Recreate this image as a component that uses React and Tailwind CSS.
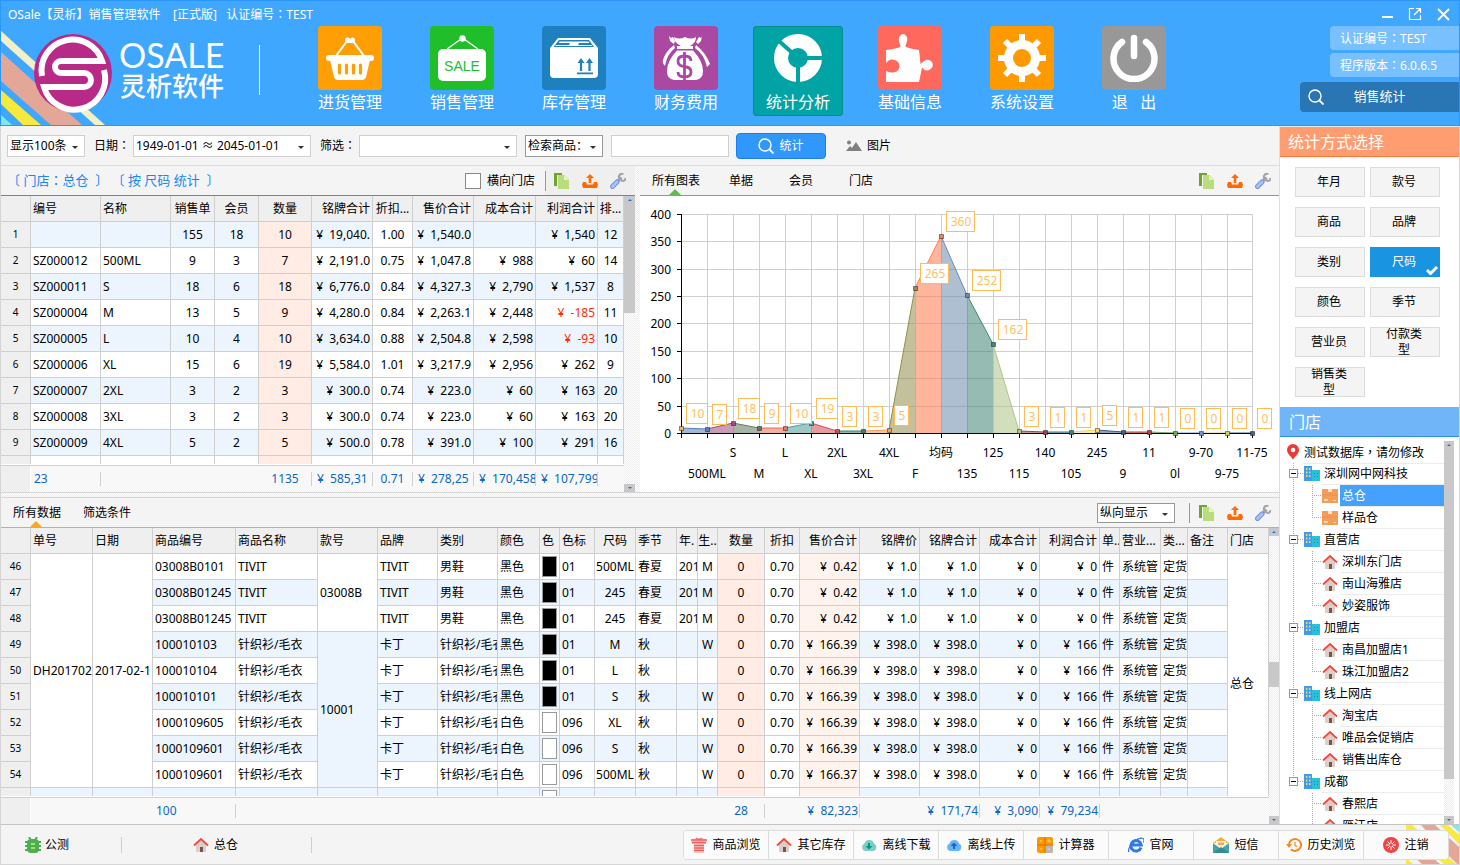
import React, { useState } from 'react';
import clsx from 'clsx';

const navItems = [
  { label: '进货管理', icon: 'basket', tile: 'bg-[#ff9f05]' },
  { label: '销售管理', icon: 'sale', tile: 'bg-[#20be2a]' },
  { label: '库存管理', icon: 'box', tile: 'bg-[#1f80c0]' },
  { label: '财务费用', icon: 'money', tile: 'bg-[#ab49a2]' },
  { label: '统计分析', icon: 'donut', tile: 'bg-[#02a3a5]', active: true },
  { label: '基础信息', icon: 'puzzle', tile: 'bg-[#ff685c]' },
  { label: '系统设置', icon: 'gear', tile: 'bg-[#ff9900]' },
  { label: '退   出', icon: 'power', tile: 'bg-[#989898]' },
];

const summaryCols = [
  { w: 30, title: '', align: 'center', type: 'no' },
  { w: 70, title: '编号' },
  { w: 70, title: '名称' },
  { w: 44, title: '销售单', align: 'center' },
  { w: 44, title: '会员', align: 'center' },
  { w: 53, title: '数量', align: 'center', type: 'qty' },
  { w: 61, title: '铭牌合计', align: 'right' },
  { w: 40, title: '折扣...', align: 'center', type: 'plain' },
  { w: 61, title: '售价合计', align: 'right' },
  { w: 62, title: '成本合计', align: 'right' },
  { w: 62, title: '利润合计', align: 'right' },
  { w: 26, title: '排...', align: 'center' },
];

const summaryRows = [
  ['1', '', '', '155', '18', '10', '¥  19,040.', '1.00', '¥  1,540.0', '', '¥  1,540', '12'],
  ['2', 'SZ000012', '500ML', '9', '3', '7', '¥  2,191.0', '0.75', '¥  1,047.8', '¥  988', '¥  60', '14'],
  ['3', 'SZ000011', 'S', '18', '6', '18', '¥  6,776.0', '0.84', '¥  4,327.3', '¥  2,790', '¥  1,537', '8'],
  ['4', 'SZ000004', 'M', '13', '5', '9', '¥  4,280.0', '0.84', '¥  2,263.1', '¥  2,448', '¥  -185', '11'],
  ['5', 'SZ000005', 'L', '10', '4', '10', '¥  3,634.0', '0.88', '¥  2,504.8', '¥  2,598', '¥  -93', '10'],
  ['6', 'SZ000006', 'XL', '15', '6', '19', '¥  5,584.0', '1.01', '¥  3,217.9', '¥  2,956', '¥  262', '9'],
  ['7', 'SZ000007', '2XL', '3', '2', '3', '¥  300.0', '0.74', '¥  223.0', '¥  60', '¥  163', '20'],
  ['8', 'SZ000008', '3XL', '3', '2', '3', '¥  300.0', '0.74', '¥  223.0', '¥  60', '¥  163', '20'],
  ['9', 'SZ000009', '4XL', '5', '2', '5', '¥  500.0', '0.78', '¥  391.0', '¥  100', '¥  291', '16'],
  ['', '', '', '', '', '', '', '', '', '', '', ''],
];

const summaryTotals = ['', '23', '', '', '', '1135', '¥  585,31', '0.71', '¥  278,25', '¥  170,458', '¥  107,799', ''];
const summarySeps = [1, 5, 6, 7, 8, 9, 10];

const detailCols = [
  { w: 30, title: '', align: 'center', type: 'no' },
  { w: 62, title: '单号' },
  { w: 60, title: '日期' },
  { w: 83, title: '商品编号' },
  { w: 82, title: '商品名称' },
  { w: 60, title: '款号' },
  { w: 60, title: '品牌' },
  { w: 60, title: '类别' },
  { w: 42, title: '颜色' },
  { w: 20, title: '色', type: 'swatch' },
  { w: 35, title: '色标' },
  { w: 41, title: '尺码', align: 'center' },
  { w: 41, title: '季节' },
  { w: 21, title: '年.' },
  { w: 20, title: '生..', align: 'center' },
  { w: 47, title: '数量', align: 'center', type: 'qty' },
  { w: 35, title: '折扣', align: 'center', type: 'plain' },
  { w: 60, title: '售价合计', align: 'right', type: 'price' },
  { w: 60, title: '铭牌价', align: 'right' },
  { w: 60, title: '铭牌合计', align: 'right' },
  { w: 60, title: '成本合计', align: 'right' },
  { w: 60, title: '利润合计', align: 'right' },
  { w: 20, title: '单..' },
  { w: 41, title: '营业...' },
  { w: 27, title: '类...' },
  { w: 40, title: '备注' },
  { w: 41, title: '门店' },
];

const shoe = (no, code, size) => [
  no, null, null, code, 'TIVIT', null, 'TIVIT', '男鞋', '黑色', 'black', '01', size, '春夏', '201', 'M', '0', '0.70',
  '¥  0.42', '¥  1.0', '¥  1.0', '¥  0', '¥  0', '件', '系统管', '定货', '', null,
];
const knit = (no, code, color, swatch, mark, size, sex, price) => [
  no, null, null, code, '针织衫/毛衣', null, '卡丁', '针织衫/毛衣', color, swatch, mark, size, '秋', '', sex, '0', '0.70',
  price, '¥  398.0', '¥  398.0', '¥  0', '¥  166', '件', '系统管', '定货', '', null,
];

const detailRows = [
  shoe('46', '03008B0101', '500ML'),
  shoe('47', '03008B01245', '245'),
  shoe('48', '03008B01245', '245'),
  knit('49', '100010103', '黑色', 'black', '01', 'M', 'W', '¥  166.39'),
  knit('50', '100010104', '黑色', 'black', '01', 'L', '', '¥  166.39'),
  knit('51', '100010101', '黑色', 'black', '01', 'S', 'W', '¥  166.39'),
  knit('52', '1000109605', '白色', 'white', '096', 'XL', 'W', '¥  166.39'),
  knit('53', '1000109601', '白色', 'white', '096', 'S', 'W', '¥  166.39'),
  knit('54', '1000109601', '白色', 'white', '096', '500ML', 'W', '¥  166.37'),
  ['', '', '', '', '', '', '', '', '', 'white', '', '', '', '', '', '', '', '', '', '', '', '', '', '', '', '', null],
];

// merged cells, keyed by row and column
const merged = {
  '0-1': { text: 'DH201702', span: 9 },
  '0-2': { text: '2017-02-1', span: 9 },
  '0-5': { text: '03008B', span: 3 },
  '3-5': { text: '10001', span: 6 },
  '0-26': { text: '总仓', span: 10 },
};

const detailTotals = detailCols.map(() => '');
detailTotals[3] = '100';
detailTotals[15] = '28';
detailTotals[17] = '¥  82,323';
detailTotals[19] = '¥  171,74';
detailTotals[20] = '¥  3,090';
detailTotals[21] = '¥  79,234';
const detailSeps = [3, 15, 17, 19, 20, 21];

const points = [
  ['', 10, '#f5b64c'], ['500ML', 7, '#5b80b8'], ['S', 18, '#a04f7f'], ['M', 9, '#647a60'],
  ['L', 9, '#e8735a', 10], ['XL', 19, '#4f9f97'], ['2XL', 3, '#d0505a'], ['3XL', 3, '#3a8365'],
  ['4XL', 5, '#f59a5a'], ['F', 265, '#94904e'], ['均码', 360, '#ff7a4e'], ['135', 252, '#6f8cae'],
  ['125', 162, '#448577'], ['115', 3, '#b0c488'], ['140', 1, '#a0414f'], ['105', 1, '#327f9e'],
  ['245', 5, '#f4d56a'], ['9', 1, '#3e5a8c'], ['11', 1, '#b83f3f'], ['0l', 0, '#74a857'],
  ['9-70', 0, '#6f93cf'], ['9-75', 0, '#d6cf5e'], ['11-75', 0, '#41608a'],
];

const modes = ['年月', '款号', '商品', '品牌', '类别', '尺码', '颜色', '季节', '营业员', '付款类型', '销售类型'];

const tree = [
  { level: 1, name: '深圳网中网科技' },
  { level: 2, name: '总仓', kind: 'depot', selected: true },
  { level: 2, name: '样品仓', kind: 'depot', end: true },
  { level: 1, name: '直营店' },
  { level: 2, name: '深圳东门店' },
  { level: 2, name: '南山海雅店' },
  { level: 2, name: '妙姿服饰', end: true },
  { level: 1, name: '加盟店' },
  { level: 2, name: '南昌加盟店1' },
  { level: 2, name: '珠江加盟店2', end: true },
  { level: 1, name: '线上网店' },
  { level: 2, name: '淘宝店' },
  { level: 2, name: '唯品会促销店' },
  { level: 2, name: '销售出库仓', end: true },
  { level: 1, name: '成都', last: true },
  { level: 2, name: '春熙店', last: true },
  { level: 2, name: '雁江店', last: true },
];

const footerItems = [
  ['商品浏览', 'shirt'], ['其它库存', 'house'], ['离线下载', 'down'], ['离线上传', 'up'], ['计算器', 'calc'],
  ['官网', 'ie'], ['短信', 'mail'], ['历史浏览', 'history'], ['注销', 'logout'],
];

// full-width punctuation centred in its cell
const Mark = ({ children = '：' }) => <span className="font-['Noto_Sans_CJK_TC',sans-serif]">{children}</span>;

const NavIcon = ({ name }) => {
  const shapes = {
    basket: (
      <>
        <path d="M10 22 21 7M38 22 27 7" stroke="#fff" strokeWidth="2" />
        <circle cx="21.500" cy="6" r="2.500" /><circle cx="26.500" cy="6" r="2.500" /><path d="M20 6h8v3h-8z" />
        <rect y="21" width="48" height="6" rx="3" />
        <path d="M4 26h40l-4 17q-1 3-4 3H12q-3 0-4-3z" />
        <path d="M13.500 31v8M20.500 31v8M27.500 31v8M34.500 31v8" stroke="#ff9f05" strokeWidth="3.200" strokeLinecap="round" />
      </>
    ),
    sale: (
      <>
        <path d="M9 15 24.500 4 40 15" fill="none" stroke="#fff" strokeWidth="1.400" />
        <circle cx="24.500" cy="4.500" r="3.200" />
        <rect y="15" width="48" height="32" rx="5" />
        <text x="24" y="37" textAnchor="middle" fill="#20be2a" className="font-['Liberation_Sans',sans-serif] text-[14px]">SALE</text>
      </>
    ),
    box: (
      <>
        <path d="M8 4h32l8 10v26q0 4-4 4H4q-4 0-4-4V14z" />
        <path d="M9 6h30l5 7H3.500z" fill="#1f80c0" />
        <path d="M9.500 7.500h29l1 1.500H29l-1 2h14v1H5l1-1h13l1-2H9z" fill="#fff" />
        <path d="M31 37V26M39.500 37V26" stroke="#1f80c0" strokeWidth="2.200" />
        <path d="M27.500 29 31 24l3.500 5zM36 29l3.500-5 3.500 5zM27 38.500h16v1.800H27z" fill="#1f80c0" />
      </>
    ),
    money: (
      <>
        <path d="M12 3q5 3 11 0 6 3 11 0 0 6-6 9h-9q-7-3-7-9z" />
        <path d="M15 12h16v3H15zM15 16.500h16Q41 27 41 37q0 8-7 9H12q-7-1-7-9 0-10 10-20.500z" />
        <path d="M12 11Q3 18 1 26q-1 3 2 6 2-12 10-18zM34 11q10 8 14 19l-3 3Q42 20 33 14zM7 2l1 5 4 3 1-3-2-4-2 1zM40 2l-1 5-3 3-2-2 3-5 2 1z" />
        <path d="M29 27q0-5-6.500-5T16 27t6.500 5.500T29 38t-6.500 5T16 38M22.500 18v28" fill="none" stroke="#ab49a2" strokeWidth="2.800" />
      </>
    ),
    donut: (
      <>
        <circle cx="24" cy="24" r="17" fill="none" stroke="#fff" strokeWidth="14" />
        <path d="M24 24h26M24 24v26M24 24 5 7" stroke="#02a3a5" strokeWidth="4" />
      </>
    ),
    puzzle: (
      <path d="M0 16q9-1 14-3 1-1-.5-4Q12 6 13 3.500 14.500 0 17 0t4 3.500q1 2.500-.5 5.500-1.500 3-.5 4 5 2 13 3l1.500 14q3-3 5.500-4 3-1 5.500 1.500 2.500 3 .5 6t-5.500 3Q38 36 36 33.500L33 48H0V37q4 1.500 6.500 1.500 5 0 6.500-4 1.500-4.500-1.500-7T5 25.500Q2 26 0 29z" />
    ),
    gear: (
      <>
        <path d="M24 0v48M0 24h48M7 7l34 34M41 7 7 41" stroke="#fff" strokeWidth="6" />
        <circle cx="24" cy="24" r="18" /><circle cx="24" cy="24" r="9" fill="#ff9900" />
      </>
    ),
    power: (
      <path d="M12 8A20.500 20.500 0 1 0 36 8M24 4v18" fill="none" stroke="#fff" strokeWidth="6.500" strokeLinecap="round" />
    ),
  };
  return <svg viewBox="0 0 48 48" className="h-12 w-12 fill-white" aria-hidden="true">{shapes[name]}</svg>;
};

const SmallIcon = ({ name }) => {
  const shapes = {
    copy: (
      <>
        <path d="M0 0h8v2H3V13H0z" fill="#6fa430" />
        <path d="M4 2h6.500L15 6.500V16H4z" fill="#b9dc7d" />
        <path d="M10 2v5h5z" fill="#e3f4c5" />
      </>
    ),
    upload: (
      <path d="M8 1l4 4H9.300v5H6.700V5H4zM1 9h3l1 2.500h6L12 9h3l1 3-1 3H1l-1-3z" fill="#ff6a05" />
    ),
    wrench: (
      <>
        <path d="M8 8 11.500 4.500" stroke="#a0a3a8" strokeWidth="3" />
        <path d="M13.500.8Q10 0 9 3T11.500 7.500 15.500 5" fill="none" stroke="#a0a3a8" strokeWidth="2" />
        <path d="M2.500 13.500 7 9" stroke="#7193dc" strokeWidth="5" strokeLinecap="round" />
        <path d="M2.500 13.500 7 9" stroke="#a9c2f2" strokeWidth="3" strokeLinecap="round" />
      </>
    ),
    house: (
      <>
        <path d="M3 7.500 8 3l5 4.500V15H3z" fill="#dccfc9" /><path d="M7 10h3v5H7z" fill="#795548" />
        <path d="M1 8.500 8 2l7 6.500" fill="none" stroke="#f2493c" strokeWidth="1.800" />
      </>
    ),
    depot: (
      <>
        <path d="M0 1h16v14H0z" fill="#f29d58" /><path d="M6 1h4v3H6z" fill="#ffe1c4" />
        <path d="M0 7h16" stroke="#ee8f4a" /><path d="M2 11h4v2H2zM11 12h3v1h-3z" fill="#ffd9b5" />
      </>
    ),
    building: (
      <>
        <path d="M0 0h8v15H0z" fill="#3f9bf0" /><path d="M8 4h8v11H8z" fill="#28c0dc" />
        <path d="M2 2h1.500v2H2zM5 2h1.500v2H5zM2 5.500h1.500v2H2zM5 5.500h1.500v2H5zM2 9h1.500v2H2zM5 9h1.500v2H5z" fill="#f7d850" />
        <path d="M10 7h1v1h-1zM13 7h1v1h-1zM10 10h1v1h-1zM13 10h1v1h-1z" fill="#0c93b0" />
      </>
    ),
    pin: (
      <>
        <path d="M8 0a6 6 0 0 0-6 6c0 4 5 7 6 10 1-3 6-6 6-10a6 6 0 0 0-6-6z" fill="#ec3b35" /><circle cx="8" cy="6" r="2.300" fill="#fff" />
      </>
    ),
    bug: (
      <>
        <path d="M4 0l2 3M12 0l-2 3M0 5h16M0 9h16M0 13h16" stroke="#4caf50" strokeWidth="2" />
        <rect x="2" y="2" width="12" height="14" rx="4" fill="#4caf50" />
        <path d="M6 6h4v2H6zM6 10h4v2H6z" fill="#aadb74" />
      </>
    ),
    shirt: (
      <>
        <path d="M4 1h8l4 2-1 4h-2v9H3V7H1L0 3z" fill="#f9c9c9" />
        <path d="M0 3h16M1 5.500h14M3 8.500h10M3 11h10M3 13.500h10" stroke="#ef5c5c" strokeWidth="1.300" />
        <path d="M5 1q3 3 6 0" fill="none" stroke="#ef5c5c" />
      </>
    ),
    down: (
      <>
        <path d="M4 14a4 4 0 0 1-.5-7.500 5 5 0 0 1 9.500 0A4 4 0 0 1 12.500 14z" fill="#80cbc4" />
        <path d="M7 6h2v3h2.500L8 12.500 4.500 9H7z" fill="#009688" />
      </>
    ),
    up: (
      <>
        <path d="M4 14a4 4 0 0 1-.5-7.500 5 5 0 0 1 9.500 0A4 4 0 0 1 12.500 14z" fill="#64b5f6" />
        <path d="M7 12h2V9h2.500L8 5.500 4.500 9H7z" fill="#1467c4" />
      </>
    ),
    calc: (
      <>
        <rect width="16" height="16" rx="2" fill="#ff9800" />
        <path d="M8 8h8v6q0 2-2 2H8z" fill="#b8b8b8" />
        <path d="M8 0v16M0 8h16" stroke="#c77600" />
        <path d="M3 4h2M10.500 4h3M12 2.500v3M3 12h2M11 12h2" stroke="#ffd699" />
      </>
    ),
    ie: (
      <>
        <path d="M13 10.500A5.200 5.200 0 1 1 13.200 8H4" fill="none" stroke="#3079ea" strokeWidth="3" />
        <path d="M1 15Q-1 12 5 6t10-4.500q2 1 .5 4" fill="none" stroke="#3079ea" strokeWidth="1.300" />
      </>
    ),
    mail: (
      <>
        <path d="M0 6 8 0l8 6z" fill="#eeb134" /><path d="M3 4h10v8H3z" fill="#fff3e0" /><path d="M5 5.500h6V8H5z" fill="#ff9a6b" />
        <path d="M0 6l8 6 8-6v10H0z" fill="#43a5a5" /><path d="M0 16l8-6 8 6z" fill="#328b95" />
      </>
    ),
    history: (
      <>
        <path d="M3 8a6 6 0 1 1 1.800 4.200" fill="none" stroke="#f58a1f" strokeWidth="2" /><path d="M0 7h6l-3 4z" fill="#f58a1f" />
        <path d="M9 5v3.500l2.500 1" fill="none" stroke="#f58a1f" strokeWidth="1.200" />
      </>
    ),
    logout: (
      <>
        <circle cx="8" cy="8" r="8" fill="#ef4545" />
        <path d="M8 3v10M3 8h10M4.500 4.500l7 7M11.500 4.500l-7 7" stroke="#fff" /><circle cx="8" cy="8" r="1.500" fill="#ef4545" />
      </>
    ),
    picture: (
      <>
        <circle cx="3" cy="4.500" r="2" fill="#808080" /><path d="M0 13 4 8l2 2 4-6 6 9z" fill="#808080" />
      </>
    ),
  };
  return <svg viewBox="0 0 16 16" className="h-4 w-4 shrink-0" aria-hidden="true">{shapes[name]}</svg>;
};

const Magnifier = () => (
  <svg viewBox="0 0 16 16" className="h-4 w-4 shrink-0" fill="none" stroke="#fff" strokeWidth="1.400" aria-hidden="true">
    <circle cx="7" cy="7" r="6" /><path d="M11.500 11.500 15.500 15.500" strokeWidth="1.800" />
  </svg>
);

const Logo = () => (
  <svg viewBox="0 0 112 124" className="h-full w-[112px] shrink-0" aria-hidden="true">
    <path d="M0 30 104 124H94L0 40z" fill="#f3f0c8" />
    <path d="M0 51 81 124H50L0 80z" fill="#e4a797" />
    <path d="M0 89 40 124H22L0 103z" fill="#f8ea3c" />
    <path d="M0 114 11 124H0z" fill="#7de8ee" />
    <circle cx="72" cy="72" r="39" fill="#b82a87" />
    <path d="M41 75A31 31 0 0 1 101 60H60a6 6 0 0 0 0 12H83a7 7 0 0 1 0 14H43A31 31 0 0 0 103 69" fill="none" stroke="#fff" strokeWidth="6" />
  </svg>
);

const Picker = ({ label, value, className }) => (
  <span className={clsx('relative inline-flex border bg-white', className)}>
    <select aria-label={label} className="w-full appearance-none bg-transparent pl-[2px] pr-4 leading-4 outline-none">
      <option>{value}</option>
    </select>
    <svg viewBox="0 0 6 3" className="pointer-events-none absolute right-[6px] top-1/2 h-[3px] w-[6px]" aria-hidden="true">
      <path d="M0 0h6L3 3z" fill="#333" />
    </svg>
  </span>
);

const PanelTools = () => (
  <div className="flex items-center gap-3">
    {[['copy', '复制'], ['upload', '导出'], ['wrench', '设置']].map(([icon, label]) => (
      <button key={icon} aria-label={label}><SmallIcon name={icon} /></button>
    ))}
  </div>
);

const Arrow = ({ up }) => (
  <span className="flex h-2 w-full shrink-0 items-center justify-center bg-[#c8c8c8]">
    <svg viewBox="0 0 4 2" className="h-[2px] w-1" aria-hidden="true"><path d={up ? 'M0 2h4L2 0z' : 'M0 0h4L2 2z'} fill="#1278e0" /></svg>
  </span>
);

const hatch = 'bg-[conic-gradient(#fff_25%,#ececec_0_50%,#fff_0_75%,#ececec_0)] bg-[length:2px_2px]';

const ScrollBar = ({ before, size, className = 'w-[10px]' }) => (
  <div className={clsx('flex shrink-0 flex-col', hatch, className)}>
    <Arrow up />
    <div className="min-h-0 flex-1">
      <div style={{ height: before }} />
      <div className="bg-[#c8c8c8]" style={{ height: size }} />
    </div>
    <Arrow />
  </div>
);

const alignClass = { center: 'text-center', right: 'pr-[2px] text-right' };

const cellBg = (col, striped) => {
  if (col.type === 'no') return 'bg-[#efefef] text-[10px]';
  if (col.type === 'qty') return 'bg-[#ffece4]';
  if (col.type === 'price') return 'bg-[#fff4ed]';
  if (col.type === 'plain') return 'bg-white';
  return striped ? 'bg-[#ecf5fe]' : 'bg-white';
};

const Columns = ({ cols }) => (
  <colgroup>{cols.map((c, i) => <col key={i} style={{ width: c.w }} />)}</colgroup>
);

const DataTable = ({ cols, rows, spans = {}, stripeFirst }) => (
  <table className="w-full table-fixed border-separate border-spacing-0 whitespace-pre">
    <Columns cols={cols} />
    <thead>
      <tr>
        {cols.map((c, i) => (
          <th key={i} className={clsx('h-[26px] overflow-hidden border-b border-r border-[#cfcfcf] bg-[#efefef] p-0 font-normal', alignClass[c.align] || 'pl-[2px] text-left')}>
            {c.title}
          </th>
        ))}
      </tr>
    </thead>
    <tbody>
      {rows.map((row, r) => {
        const striped = (r % 2 === 0) === Boolean(stripeFirst);
        return (
          <tr key={r}>
            {row.map((value, i) => {
              const span = spans[`${r}-${i}`];
              if (value === null && !span) return null;
              const text = span ? span.text : value;
              return (
                <td
                  key={i}
                  rowSpan={span ? span.span : 1}
                  className={clsx('h-[26px] overflow-hidden border-b border-r border-[#cfcfcf] p-0', alignClass[cols[i].align] || 'pl-[2px]', cellBg(cols[i], striped), text.includes('¥  -') && 'text-[#ff2a00]')}
                >
                  {cols[i].type === 'swatch'
                    ? <span className={clsx('block h-[21px] w-[15px] border border-[#999]', text === 'black' ? 'bg-black' : 'bg-white')} />
                    : text}
                </td>
              );
            })}
          </tr>
        );
      })}
    </tbody>
  </table>
);

const TotalsTable = ({ cols, totals, seps, moneyClass }) => (
  <div className="shrink-0 border-t border-[#cfcfcf] bg-[#f8f8f8]">
    <table className="w-full table-fixed border-separate border-spacing-0 whitespace-pre text-[#0b66c8]">
      <Columns cols={cols} />
      <tbody>
        <tr>
          {totals.map((t, i) => (
            <td key={i} className={clsx('h-[26px] p-0', i === 0 && 'border-r border-white bg-[#efefef]')}>
              <div
                className={clsx(
                  'h-[14px] overflow-x-clip leading-[14px]',
                  seps.includes(i) && 'border-r border-[#cfcfcf]',
                  t.includes('¥') ? moneyClass : cols[i].align === 'center' ? 'text-center' : 'pl-[3px]'
                )}
              >
                {t}
              </div>
            </td>
          ))}
        </tr>
      </tbody>
    </table>
  </div>
);

const Tabs = ({ items, markClass }) => (
  <div className="flex h-full pl-px">
    {items.map((item, i) => (
      <button key={item} className="relative h-full px-[11px]">
        {item}
        {i === 0 && <span className={clsx('absolute bottom-0 left-1/2 -ml-[7px] border-x-[6px] border-b-[6px] border-x-transparent', markClass)} />}
      </button>
    ))}
  </div>
);

const AreaChart = () => {
  const px = (i) => 41 + Math.min(i * 26, 571);
  const py = (v) => 237 - Math.round(v * 0.5475);
  const ticks = [0, 50, 100, 150, 200, 250, 300, 350, 400];
  return (
    <svg viewBox="0 0 639 296" className="h-full w-full text-[12px]" role="img" aria-label="尺码销售数量图表">
      <g stroke="#cfcfcf" shapeRendering="crispEdges">
        {ticks.slice(1).map((t) => <path key={t} d={`M41 ${py(t) + 0.5}H612`} />)}
        {points.map((p, i) => <path key={i} d={`M${px(i) + 0.5} 18V237`} />)}
      </g>
      {points.slice(1).map(([, v, color], n) => {
        const x1 = px(n);
        const x2 = px(n + 1);
        const y1 = py(points[n][1]);
        return (
          <g key={n}>
            <path d={`M${x1} 237V${y1}L${x2} ${py(v)}V237z`} fill={color} fillOpacity="0.560" />
            <path d={`M${x1} ${y1}L${x2} ${py(v)}`} stroke={color} />
          </g>
        );
      })}
      <g stroke="#000" shapeRendering="crispEdges">
        <path d="M41.500 18V241M37 237.500H612" />
        {ticks.map((t) => <path key={t} d={`M37 ${py(t) + 0.5}h4`} />)}
        {points.map((p, i) => <path key={i} d={`M${px(i) + 0.5} 237v5`} />)}
      </g>
      {ticks.map((t) => <text key={t} x="31" y={py(t) + 5} textAnchor="end">{t}</text>)}
      {points.map(([name, v, color], i) => (
        <g key={i}>
          <rect x={px(i) - 1.5} y={py(v) - 1.5} width="4" height="4" fill={color} stroke="#00000066" />
          <text x={px(i)} y={i % 2 ? 282 : 261} textAnchor="middle">{name}</text>
        </g>
      ))}
      {points.map(([, v, , label], i) => {
        const text = String(label || v);
        const w = text.length * 7 + 7;
        return (
          <g key={i}>
            <rect x={px(i) + 5.5} y={py(v) - 24.5} width={w} height="20" fill="#fff" stroke="#ffbb55" />
            <text x={px(i) + 6 + w / 2} y={py(v) - 10} textAnchor="middle" fill="#ffbf62">{text}</text>
          </g>
        );
      })}
    </svg>
  );
};

const TreeLines = ({ level, last, end }) => (
  <svg width={level === 1 ? 19 : 37} height="22" className="shrink-0" fill="none" stroke="#aaa" aria-hidden="true">
    {level === 1 && (
      <>
        <path d={last ? 'M8.500 0v6' : 'M8.500 0v22'} strokeDasharray="1 1" />
        <path d="M13 10.500h5" strokeDasharray="1 1" />
        <rect x="4.500" y="6.500" width="8" height="8" fill="#fff" stroke="#999" />
        <path d="M6 10.500h5" stroke="#000" />
      </>
    )}
    {level === 2 && (
      <>
        {!last && <path d="M8.500 0v22" strokeDasharray="1 1" />}
        <path d={end ? 'M27.500 0v10' : 'M27.500 0v22'} strokeDasharray="1 1" />
        <path d="M27 10.500h10" strokeDasharray="1 1" />
      </>
    )}
  </svg>
);

const Header = () => (
  <header className="flex h-[126px] shrink-0 border border-[#2b97fa] bg-[#40a7ff] text-white">
    <div className="relative flex w-[304px] shrink-0">
      <div className="absolute left-[7px] top-1 whitespace-pre leading-[18px]">OSale【灵析】销售管理软件    [正式版]   认证编号<Mark />TEST</div>
      <Logo />
      <div className="flex flex-1 items-start pl-[6px] pt-[37px]">
        <div className="whitespace-nowrap">
          <div className="font-['Lato',sans-serif] text-[34px] leading-[34px]">OSALE</div>
          <div className="pl-px text-[26px] font-medium leading-[28px]">灵析软件</div>
        </div>
        <span className="ml-auto mr-[45px] mt-[7px] h-[50px] w-px bg-white" />
      </div>
    </div>
    <nav className="flex gap-[22px] pt-[25px]">
      {navItems.map((item) => (
        <button
          key={item.label}
          className={clsx('flex h-[90px] w-[90px] shrink-0 flex-col items-center rounded-sm', item.active && 'bg-[#02a3a5] shadow-[inset_0_0_0_1px_#0a8b8e]')}
        >
          <span className={clsx('flex h-16 w-16 items-center justify-center rounded-sm', !item.active && item.tile)}><NavIcon name={item.icon} /></span>
          <span className="whitespace-pre text-[16px] leading-6">{item.label}</span>
        </button>
      ))}
    </nav>
    <div className="ml-auto flex w-[159px] shrink-0 flex-col items-end">
      <div className="flex h-[25px] items-center gap-3 pr-[8px]">
        <button aria-label="最小化"><svg viewBox="0 0 16 16" className="h-4 w-4"><path d="M3 11h11" stroke="#fff" strokeWidth="2" /></svg></button>
        <button aria-label="还原"><svg viewBox="0 0 16 16" className="h-4 w-4" fill="none" stroke="#fff" strokeWidth="1.200"><path d="M7 2.500H2.500v11h11V9M9 2.500h4.500V7M13.500 2.500 7 9" /></svg></button>
        <button aria-label="关闭"><svg viewBox="0 0 16 16" className="h-4 w-4"><path d="M3 3l11 11M14 3 3 14" stroke="#fff" strokeWidth="1.800" /></svg></button>
      </div>
      <div className="h-6 w-[129px] rounded-l-sm bg-[#78c0ff] pl-[10px] leading-6">认证编号<Mark />TEST</div>
      <div className="mt-[3px] h-6 w-[129px] rounded-l-sm bg-[#78c0ff] pl-[10px] leading-6">程序版本<Mark />6.0.6.5</div>
      <button className="mt-[5px] flex h-[30px] w-full items-center rounded-l-sm bg-[#2a76b5] pl-2 pr-6 text-[13px]">
        <Magnifier />
        <span className="flex-1 text-center">销售统计</span>
      </button>
    </div>
  </header>
);

const Sidebar = ({ mode, setMode }) => (
  <aside className="flex w-[180px] shrink-0 flex-col border-l border-[#dedede] bg-white">
    <h2 className="h-[31px] shrink-0 border-b border-t border-b-[#ff7733] border-t-[#e8e8e8] bg-[#ff9d70] pl-2 text-[16px] leading-[30px] text-white">统计方式选择</h2>
    <div className="grid shrink-0 grid-cols-[70px_70px] gap-x-[5px] gap-y-[10px] py-[10px] pl-[15px]">
      {modes.map((m) => (
        <button
          key={m}
          onClick={() => setMode(m)}
          className={clsx('relative flex h-[30px] items-center justify-center overflow-hidden border pl-[15px] pr-[17px] text-center leading-4', m === mode ? 'border-[#1894e0] bg-[#1894e0] text-white' : 'border-[#dcdcdc] bg-[#f4f4f4]')}
        >
          {m}
          {m === mode && (
            <svg viewBox="0 0 12 10" className="absolute bottom-px right-px h-[10px] w-3" fill="none" stroke="#fff" strokeWidth="3" aria-hidden="true"><path d="M1 5l3.500 3.500L11 2" /></svg>
          )}
        </button>
      ))}
    </div>
    <h2 className="h-[30px] shrink-0 border-b border-[#2b8df0] bg-[#6fb5f7] pl-[9px] text-[16px] leading-[30px] text-white">门店</h2>
    <div className="mr-[5px] mt-1 flex min-h-0 flex-1 overflow-hidden">
      <ul className="min-w-0 flex-1 overflow-hidden pl-[5px] leading-[21px]">
        <li className="flex h-[22px] items-center">
          <SmallIcon name="pin" />
          <span className="ml-[2px] flex-1 whitespace-nowrap border-b border-[#ececec] pl-px">测试数据库<Mark>，</Mark>请勿修改</span>
        </li>
        {tree.map((node) => (
          <li key={node.name} className="flex h-[22px] items-center">
            <TreeLines {...node} />
            <SmallIcon name={node.level === 1 ? 'building' : node.kind || 'house'} />
            <span className={clsx('ml-[2px] flex-1 whitespace-nowrap border-b border-[#ececec] pl-[2px]', node.selected && 'bg-[#45a1ff] text-white')}>{node.name}</span>
          </li>
        ))}
      </ul>
      <ScrollBar before="0%" size="90%" />
    </div>
  </aside>
);

const Footer = () => (
  <footer className="relative flex h-[41px] shrink-0 items-center justify-between border border-[#d6d6d6] border-t-[#c4c4c4] bg-[#f4f4f4] pr-[10px]">
    <svg viewBox="0 0 53 39" className="absolute right-0 top-0 h-[39px] w-[53px]" aria-hidden="true">
      <path d="M0 0h6L50 39H38L0 5z" fill="#f8ea3c" /><path d="M15 0h14l24 22v17h-2L42 30z" fill="#e4a797" /><path d="M34 0h8l11 10v9z" fill="#f8ea3c" />
      <path d="M45 0h8v7z" fill="#7de8ee" /><path d="M0 33l7 6H0z" fill="#f8ea3c" /><path d="M8 32h18l8 7H16z" fill="#e4a797" />
    </svg>
    <div className="flex items-center">
      <div className="flex w-[121px] items-center gap-1 border-r border-[#cfcfcf] pl-6 leading-4"><SmallIcon name="bug" />公测</div>
      <div className="flex w-[190px] items-center gap-[5px] border-r border-[#cfcfcf] pl-[71px] leading-4"><SmallIcon name="house" />总仓</div>
    </div>
    <div className="relative flex h-[30px] overflow-hidden rounded-sm border-y border-r border-[#dcdcdc] bg-[#fbfbfb]">
      {footerItems.map(([label, icon]) => (
        <button key={label} className="flex w-[85px] items-center justify-center gap-[5px] whitespace-nowrap border-l border-[#dcdcdc]">
          <SmallIcon name={icon} />{label}
        </button>
      ))}
    </div>
  </footer>
);

const App = () => {
  const [mode, setMode] = useState('尺码');

  return (
    <div className="flex h-screen flex-col overflow-hidden bg-[#f4f4f4] font-['Noto_Sans','Noto_Sans_CJK_SC',sans-serif] text-[12px] text-black">
      <Header />
      <div className="flex min-h-0 flex-1 border-x border-[#d6d6d6]">
        <main className="grid min-w-0 flex-1 grid-rows-[40px_minmax(0,327fr)_5px_minmax(0,326fr)]">
          {/* Filter bar */}
          <div className="flex items-center border-b border-[#dcdcdc] pl-[6px]">
            <Picker label="显示条数" value="显示100条" className="h-[22px] w-[78px] border-[#cfcfcf]" />
            <span className="ml-[9px] w-[39px] whitespace-nowrap">日期<Mark /></span>
            <Picker label="日期" value="1949-01-01 ≈ 2045-01-01" className="h-[22px] w-[178px] border-[#cfcfcf]" />
            <span className="ml-[9px] w-[39px] whitespace-nowrap">筛选<Mark /></span>
            <Picker label="筛选" value="" className="h-[22px] w-[158px] border-[#cfcfcf]" />
            <Picker label="检索方式" value="检索商品：" className="ml-2 h-[22px] w-[78px] border-[#999]" />
            <input aria-label="检索内容" className="ml-2 h-[22px] w-[118px] border border-[#cfcfcf] bg-white px-1 outline-none" />
            <button className="ml-[7px] flex h-[26px] w-[90px] items-center justify-center gap-[5px] rounded-sm border border-[#1a7cf0] bg-[#3097fb] text-white">
              <Magnifier />统计
            </button>
            <button className="ml-5 flex items-center gap-[5px]"><SmallIcon name="picture" />图片</button>
          </div>

          {/* Summary table and chart */}
          <div className="grid grid-cols-[minmax(0,634fr)_5px_minmax(0,639fr)] grid-rows-[minmax(0,1fr)] border-b border-[#d6d6d6]">
            <section className="flex min-w-0 flex-col bg-white">
              <div className="flex h-[30px] shrink-0 items-center border-b border-[#2b97f0] bg-[#f4f4f4]">
                <div className="whitespace-pre pl-[6px] text-[13px] text-[#1a86f5]">〔 门店<Mark />总仓  〕 〔 按 尺码 统计  〕</div>
                <label className="ml-auto flex items-center gap-[6px] pr-[10px]">
                  <input type="checkbox" className="h-4 w-4 appearance-none border border-[#888] bg-white" />
                  横向门店
                </label>
                <div className="flex h-full items-center bg-[#efefef] pr-[9px]">
                  <span className="mr-2 h-5 w-px bg-[#999]" />
                  <PanelTools />
                </div>
              </div>
              <div className="flex min-h-0 flex-1">
                <div className="flex min-w-0 flex-1 flex-col">
                  <div className="mb-px min-h-0 flex-1 overflow-hidden">
                    <DataTable cols={summaryCols} rows={summaryRows} stripeFirst />
                  </div>
                  <TotalsTable cols={summaryCols} totals={summaryTotals} seps={summarySeps} moneyClass="pl-[5px]" />
                </div>
                <ScrollBar before="0%" size="39%" className="w-[11px]" />
              </div>
            </section>
            <div className={hatch} />
            <section className="flex min-w-0 flex-col bg-white">
              <div className="flex h-[30px] shrink-0 items-center justify-between border-b border-[#5cbf4e] bg-[#f4f4f4] pr-2">
                <div className="flex h-full">
                  <Tabs items={['所有图表']} markClass="border-b-[#5cbf4e]" />
                  <div className="flex gap-9 pl-[18px]">
                    {['单据', '会员', '门店'].map((t) => <button key={t}>{t}</button>)}
                  </div>
                </div>
                <PanelTools />
              </div>
              <div className="min-h-0 flex-1"><AreaChart /></div>
            </section>
          </div>
          <div className={clsx('border-b border-[#d6d6d6]', hatch)} />

          {/* Detail table */}
          <section className="flex min-w-0 flex-col bg-white">
            <div className="flex h-[30px] shrink-0 items-center justify-between border-b border-[#f9a825] bg-[#f4f4f4] pr-2">
              <Tabs items={['所有数据', '筛选条件']} markClass="border-b-[#f9a825]" />
              <div className="flex items-center">
                <Picker label="显示方式" value="纵向显示" className="h-5 w-[78px] border-[#999]" />
                <span className="ml-[14px] mr-[9px] h-5 w-px bg-[#999]" />
                <PanelTools />
              </div>
            </div>
            <div className="flex min-h-0 flex-1">
              <div className="flex min-w-0 flex-1 flex-col">
                <div className="mb-px min-h-0 flex-1 overflow-hidden">
                  <DataTable cols={detailCols} rows={detailRows} spans={merged} />
                </div>
                <TotalsTable cols={detailCols} totals={detailTotals} seps={detailSeps} moneyClass="pr-px text-right" />
              </div>
              <ScrollBar before="45%" size="9%" />
            </div>
          </section>
        </main>
        <Sidebar mode={mode} setMode={setMode} />
      </div>
      <Footer />
    </div>
  );
};

export default App;
